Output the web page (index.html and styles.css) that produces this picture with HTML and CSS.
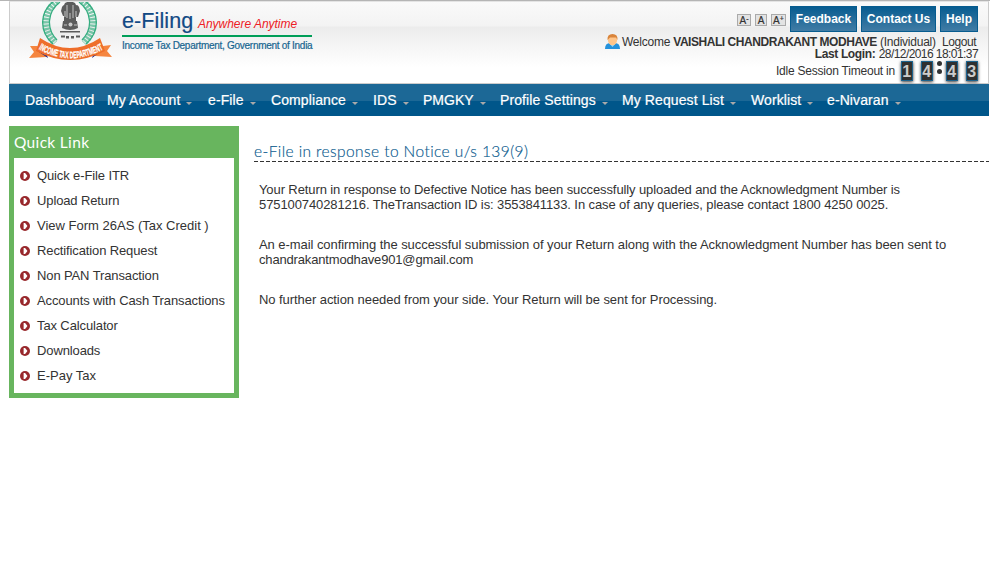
FILE: index.html
```
<!DOCTYPE html>
<html lang="en">
<head>
<meta charset="utf-8">
<title>e-Filing</title>
<link rel="stylesheet" href="styles.css">
</head>
<body>
<svg width="0" height="0" class="defs">
  <symbol id="bullet" viewBox="0 0 11 11"><circle cx="5.500" cy="5.500" r="5.500" fill="#98282c"/><path d="M4 2.300h1.600l2.600 3.200-2.600 3.200H4z" fill="#fff"/></symbol>
</svg>
<header class="header">
  <div class="brand">
    <svg class="emblem" width="84" height="60" viewBox="0 0 84 60">
      <g fill="none" stroke="#35ad80">
        <path d="M29 -1C15 9 14 28 27 41M54 -1C68 9 69 28 56 41" stroke-width="6.500" stroke-dasharray="2.400 1" opacity=".65"/>
        <path d="M26 -1C11 10 11 30 25 42M57 -1C72 10 72 30 58 42M32 0C19 10 18 27 29 38M51 0C64 10 65 27 54 38" stroke-width="1.300"/>
      </g>
      <g fill="#5c5c5c">
        <path d="M37 1q5-3 10 0l2 4-2 6h-10l-2-6zM34 5q2-4 5 0l1 9h-5l-2-5zM46 5q3-4 5 0l1 4-2 6h-5zM36 10h12v9H36zM35 19h14l1 7q-8 4-16 0z"/>
        <path d="M32 29h20v1.500H32zM33 33.500h4v2h-4zM38 34h3v2.500h-3zM43 34h3v2.500h-3zM48 33.500h4v2h-4z"/>
      </g>
      <path d="M39 3v13M45 3v13M42 11v6M37 9v6M48 9v6M36 23h3M46 23h3" stroke="#d0d0d0" stroke-width=".9"/>
      <circle cx="42.500" cy="22.500" r="2" fill="#ccc"/>
      <path d="M9 44L2 44l4 6-5 6 17-1 3-6zM75 44l8-1-4 6 5 6-17-1-3-6z" fill="#f5853f"/>
      <path d="M8 48l12 8-3-8zM76 47l-12 9 3-8z" fill="#1b2486"/>
      <path d="M12 36Q42 56 72 36L77 49Q42 67 8 49z" fill="#ee6e2b"/>
      <path id="arc" d="M10.500 47Q42 65.500 76 47" fill="none"/>
      <text class="ribbon-text"><textPath href="#arc" textLength="68" lengthAdjust="spacingAndGlyphs">INCOME TAX DEPARTMENT</textPath></text>
    </svg>
    <div class="wordmark">
      <div class="title"><span class="name">e-Filing</span><span class="slogan">Anywhere Anytime</span></div>
      <div class="dept">Income Tax Department, Government of India</div>
    </div>
  </div>
  <div class="tools">
    <div class="buttons">
      <span class="size">A<sup>-</sup></span><span class="size mid">A</span><span class="size last">A<sup>+</sup></span>
      <a class="btn feedback">Feedback</a><a class="btn contact">Contact Us</a><a class="btn help">Help</a>
    </div>
    <div class="welcome">
      <svg width="15" height="16" viewBox="0 0 15 16"><path d="M0 15q0-6 5-6h5q5 0 5 6z" fill="#2592dc"/><path d="M4 9h7l-3.500 4z" fill="#9bd8f5"/><ellipse cx="7.500" cy="6" rx="4.600" ry="5.300" fill="#ffc58a"/><path d="M2.500 6Q2 0 7.500 0T12.500 6L11 3.500H5z" fill="#d9843b"/></svg>
      <span class="who">Welcome <b>VAISHALI CHANDRAKANT MODHAVE</b> (Individual)</span><a class="logout">Logout</a>
    </div>
    <div class="login"><b>Last Login:</b> <span>28/12/2016 18:01:37</span></div>
    <div class="timer"><span class="idle">Idle Session Timeout in</span><b class="digit">1</b><b class="digit d2">4</b><span class="colon"><i></i><i></i></span><b class="digit">4</b><b class="digit d4">3</b></div>
  </div>
</header>
<nav class="nav">
  <a class="w-dash">Dashboard</a>
  <a class="w-acc drop">My Account</a>
  <a class="w-file drop">e-File</a>
  <a class="w-comp drop">Compliance</a>
  <a class="w-ids drop">IDS</a>
  <a class="w-pm drop">PMGKY</a>
  <a class="w-prof drop">Profile Settings</a>
  <a class="w-req drop">My Request List</a>
  <a class="w-work drop">Worklist</a>
  <a class="w-niv drop">e-Nivaran</a>
</nav>
<div class="main">
  <aside class="quick">
    <h2><svg width="80" height="22"><text x="0" y="16" textLength="75">Quick Link</text></svg></h2>
    <ul>
      <li><svg><use href="#bullet"/></svg><span>Quick e-File ITR</span></li>
      <li><svg><use href="#bullet"/></svg><span>Upload Return</span></li>
      <li><svg><use href="#bullet"/></svg><span class="plain">View Form 26AS (Tax Credit )</span></li>
      <li><svg><use href="#bullet"/></svg><span>Rectification Request</span></li>
      <li><svg><use href="#bullet"/></svg><span>Non PAN Transaction</span></li>
      <li><svg><use href="#bullet"/></svg><span>Accounts with Cash Transactions</span></li>
      <li><svg><use href="#bullet"/></svg><span>Tax Calculator</span></li>
      <li><svg><use href="#bullet"/></svg><span>Downloads</span></li>
      <li><svg><use href="#bullet"/></svg><span class="plain">E-Pay Tax</span></li>
    </ul>
  </aside>
  <main class="content">
    <h1><svg width="290" height="22"><text x="0" y="16" textLength="274">e-File in response to Notice u/s 139(9)</text></svg></h1>
    <svg class="rule" width="735" height="1"><path d="M0 .5H735" stroke="#333" stroke-dasharray="4 2"/></svg>
    <p class="tight">Your Return in response to Defective Notice has been successfully uploaded and the Acknowledgment Number is<br>575100740281216. TheTransaction ID is: 3553841133. In case of any queries, please contact 1800 4250 0025.</p>
    <p>An e-mail confirming the successful submission of your Return along with the Acknowledgment Number has been sent to<br><span class="mail">chandrakantmodhave901@gmail.com</span></p>
    <p>No further action needed from your side. Your Return will be sent for Processing.</p>
  </main>
</div>
</body>
</html>
```

FILE: styles.css
```
* { box-sizing: border-box; }
body {
  margin: 0;
  height: 583px;
  overflow: hidden;
  border-top: 1px solid #b5b5b5;
  background: #fff;
  color: #333;
  font: 13px/15px "Liberation Sans", Arial, sans-serif;
}
.defs { position: absolute; }
.header {
  display: flex;
  justify-content: space-between;
  width: 980px;
  height: 83px;
  margin-left: 9px;
  border: 1px solid #ccc;
  border-top-color: #e4e4e4;
  background: linear-gradient(#fafafa 0, #f3f3f3 24px, #ececec 25px, #fff 65px);
}
.brand { display: flex; }
.emblem { display: block; margin-left: 18px; }
.ribbon-text { fill: #fff; stroke: #fff; stroke-width: .3px; font: bold 9.500px "Liberation Sans", sans-serif; }
.wordmark { width: 192px; margin-left: 10px; padding-top: 6px; white-space: nowrap; }
.title { display: flex; align-items: baseline; height: 27px; line-height: 26px; }
.name { width: 76px; color: #124984; font-size: 21.500px; letter-spacing: .1px; -webkit-text-stroke: .2px #124984; }
.slogan { color: #ed2024; font-size: 12px; font-style: italic; letter-spacing: -.03px; }
.dept {
  width: 190px;
  border-top: 2px solid #009e58;
  color: #176590;
  font-size: 10px;
  line-height: 18px;
  letter-spacing: -.28px;
  -webkit-text-stroke: .2px #176590;
}
.tools { width: 400px; padding-right: 10px; }
.buttons { display: flex; justify-content: flex-end; height: 30px; padding-top: 4px; }
.size {
  width: 14px;
  height: 12px;
  margin: 8px 4px 0 0;
  border: 1px solid #aaa;
  background: #e3e3e3;
  color: #333;
  font-size: 10px;
  line-height: 11px;
  text-align: center;
  white-space: nowrap;
  -webkit-text-stroke: .2px #333;
}
.size sup { font-size: 7px; line-height: 0; vertical-align: 3px; }
.size.mid { width: 12px; }
.size.last { width: 15px; }
.btn {
  height: 26px;
  margin-left: 4px;
  border: 1px solid #075c8f;
  background: linear-gradient(#075c90, #417ca5);
  color: #fff;
  font-size: 12px;
  font-weight: bold;
  line-height: 24px;
  text-align: center;
}
.feedback { width: 67px; margin-left: 0; }
.contact { width: 75px; }
.help { width: 38px; }
.welcome { display: flex; justify-content: flex-end; height: 14px; margin-top: 3px; font-size: 12px; line-height: 14px; }
.welcome svg { flex: none; margin: -1px 2px 0 0; }
.who { width: 314px; white-space: nowrap; letter-spacing: -.24px; }
.who b { letter-spacing: -.45px; }
.logout { width: 34px; margin: 0 2px 0 6px; letter-spacing: -.4px; }
.login { height: 12px; font-size: 12px; line-height: 12px; margin-top: -1px; text-align: right; }
.login b { letter-spacing: -.36px; }
.login span { letter-spacing: -.57px; }
.timer { display: flex; justify-content: flex-end; height: 20px; margin-top: 1px; font-size: 12px; }
.idle { margin: 3px 6px 0 0; white-space: nowrap; letter-spacing: -.22px; }
.digit {
  width: 12px;
  height: 20px;
  margin-right: 8px;
  border: 1px solid #1c638e;
  background: #303030;
  box-shadow: 0 1px 3px #333;
  color: #ccc;
  font-size: 16px;
  line-height: 19px;
  text-align: center;
  text-indent: -.5px;
}
.d2 { margin-right: 4px; }
.d4 { margin-right: 0; }
.colon { width: 5px; margin-right: 4px; }
.colon i { display: block; width: 5px; height: 5px; margin-bottom: 3px; border-radius: 3px; background: #333; }
.nav {
  display: flex;
  width: 980px;
  height: 32px;
  margin-left: 9px;
  padding-left: 16px;
  background: linear-gradient(#1c6896 17px, #00568a 17px);
  color: #fff;
  font-size: 14px;
  line-height: 33px;
  letter-spacing: .1px;
  white-space: nowrap;
  -webkit-text-stroke: .2px #fff;
}
.drop::after {
  content: "";
  display: inline-block;
  margin-left: 6px;
  border: 3px solid transparent;
  border-top-color: #a9a9a9;
  border-bottom: 0;
}
.w-dash { width: 82px; }
.w-acc { width: 101px; }
.w-file { width: 63px; }
.w-comp { width: 102px; }
.w-ids { width: 50px; }
.w-pm { width: 77px; letter-spacing: 0; }
.w-prof { width: 122px; }
.w-req { width: 129px; }
.w-work { width: 76px; }
.main { display: flex; margin: 10px 0 0 9px; }
.quick { width: 230px; height: 272px; border: 5px solid #68b55e; border-top: 0; background: #fff; }
h1, h2 { margin: 0; font-weight: 300; }
h1 svg, h2 svg { display: block; }
h1 text, h2 text { font: 300 15.500px Lato, sans-serif; font-variant-ligatures: none; }
h1 text { fill: #07588c; stroke: #07588c; stroke-width: .15px; }
h2 { height: 32px; padding-top: 6px; background: #68b55e; }
h2 text { fill: #fff; font-weight: 400; }
ul { margin: 5px 0 0; padding: 0; list-style: none; }
li { display: flex; align-items: center; height: 25px; padding-left: 6px; white-space: nowrap; letter-spacing: -.12px; }
.plain { letter-spacing: 0; }
li svg { width: 10px; height: 10px; margin: 1px 7px 0 0; }
.content { width: 735px; margin-left: 15px; padding-top: 15px; }
.rule { display: block; margin-top: -2px; }
p { margin: 0 0 25px 5px; white-space: nowrap; letter-spacing: -.064px; }
p.tight { margin-top: 20px; letter-spacing: -.104px; }
.mail { letter-spacing: -.16px; }
```
